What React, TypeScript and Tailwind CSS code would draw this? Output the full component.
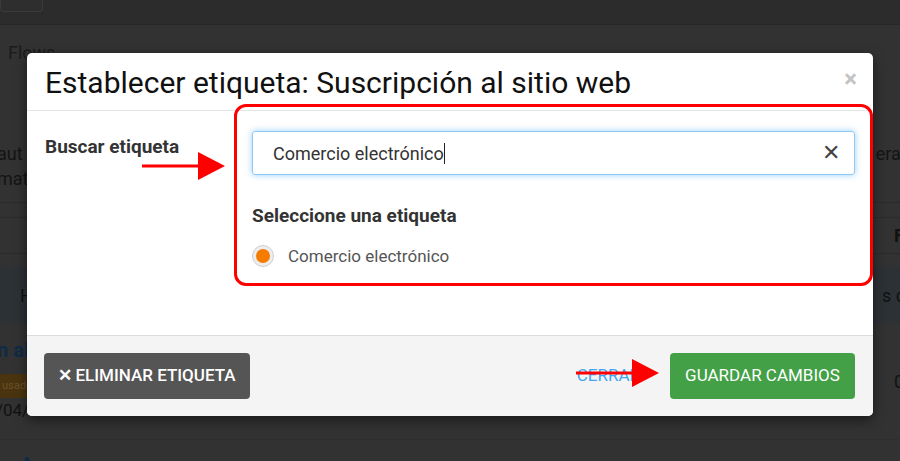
import React from "react";

function Arrow({ className, w }: { className: string; w: number }) {
  return (
    <svg className={className} width={w} height={30} viewBox={`0 0 ${w} 30`}>
      <line x1={0} y1={15} x2={w - 24} y2={15} stroke="#ff0000" strokeWidth={3} />
      <polygon points={`${w - 27},1 ${w},15 ${w - 27},29`} fill="#ff0000" />
    </svg>
  );
}

export default function App() {
  return (
    <div
      className="relative w-[900px] h-[461px] overflow-hidden bg-[#323232] text-[#111]"
      style={{ fontFamily: "Roboto, 'Noto Sans', sans-serif" }}
    >
      {/* background page (dimmed) */}
      <div className="flex flex-col h-full">
        <div className="h-[25px] shrink-0 bg-[#2c2c2c] border-b border-[#272727] relative">
          <div className="w-[43px] h-[12px] border border-[#3a3a3a] border-t-0 rounded-b-[4px] bg-[#2e2e2e]" />
        </div>
        <div className="pl-[8px] pt-[14px] h-[76px] shrink-0 text-[18px] text-[#1b1b1b]">Flows</div>
        <div className="flex justify-between h-[101px] shrink-0 pt-[40px] text-[18px] text-[#141414] leading-[25px]">
          <div className="-ml-[3px]">
            <div>aut</div>
            <div>mat</div>
          </div>
          <div className="mr-[-10px] pl-[2px]">eras</div>
        </div>
        <div className="border-t border-[#2b2b2b] h-[15px] shrink-0" />
        <div className="border-t border-[#2b2b2b] h-[36px] shrink-0 flex justify-end items-center">
          <span className="font-bold text-[18px] text-[#111] mr-[-4px]">F</span>
        </div>
        <div className="border-t border-[#2b2b2b] h-[14px] shrink-0" />
        <div className="h-[56px] shrink-0 bg-[#2c3136] flex justify-between items-center text-[18px] text-[#111]">
          <span className="pl-[20px]">H</span>
          <span className="mr-[-6px]">s q</span>
        </div>
        <div className="h-[116px] shrink-0 relative flex justify-between">
          <div className="pt-[13px]">
            <div className="text-[20px] font-bold text-[#0f2b47] -ml-[3px] leading-[28px]">n al</div>
            <div className="mt-[10px] bg-[#4a3410] text-[#6b5224] text-[11px] px-[2px] w-[27px] h-[24px] leading-[24px] overflow-hidden">usado</div>
            <div className="mt-[0px] text-[17px] text-[#111] -ml-[4px]">/04/2023 10:04:47</div>
          </div>
          <div className="pt-[45px] text-[18px] text-[#111] mr-[-4px]">0</div>
        </div>
        <div className="border-t border-[#2e2e2e] pt-[10px] pl-[20px] text-[20px] font-bold text-[#0f2b47]">Acc</div>
      </div>

      {/* modal */}
      <div className="absolute left-[27px] top-[53px] w-[846px] h-[363px] bg-white rounded-[5px] shadow-[0_4px_12px_rgba(0,0,0,0.5)] flex flex-col overflow-hidden">
        <div className="h-[58px] shrink-0 border-b border-[#e5e5e5] flex items-center justify-between pl-[18px] pr-[18px]">
          <h1 className="text-[30px] text-[#111] leading-none pt-[2px]">
            Establecer etiqueta: Suscripción al sitio web
          </h1>
          <span className="text-[24px] text-[#c4c4c4] font-bold leading-none -mt-[5px] mr-[-2px]">×</span>
        </div>
        <div className="flex-1 flex pl-[18px] pr-[18px] pt-[20px]">
          <div className="w-[207px] shrink-0 pt-[2px] text-[19px] font-bold text-[#333]">Buscar etiqueta</div>
          <div className="flex-1">
            <div className="h-[44px] border border-[#90c8f6] rounded-[3px] shadow-[0_0_6px_rgba(66,165,245,0.55)] flex items-center justify-between pl-[20px] pr-[14px]">
              <span className="text-[18px] text-[#333]">
                Comercio electrónico<span className="inline-block w-[1px] h-[21px] bg-[#222] align-middle -mt-[2px]" />
              </span>
              <span className="text-[22px] text-[#444] leading-none">✕</span>
            </div>
            <div className="mt-[27px] text-[19px] font-bold text-[#333]">Seleccione una etiqueta</div>
            <div className="mt-[13px] flex items-center gap-[14px]">
              <span className="w-[22px] h-[22px] rounded-full border border-[#cfcfcf] bg-[#ededed] flex items-center justify-center">
                <span className="w-[14px] h-[14px] rounded-full bg-[#f57c00]" />
              </span>
              <span className="text-[17px] text-[#555]">Comercio electrónico</span>
            </div>
          </div>
        </div>
        <div className="h-[81px] shrink-0 bg-[#f4f4f4] border-t border-[#dcdcdc] flex items-center justify-between pl-[17px] pr-[18px]">
          <button className="h-[46px] w-[206px] bg-[#555555] rounded-[4px] text-white text-[17px] font-medium flex items-center justify-center gap-[3px]">
            <span className="text-[17px] font-bold">✕</span>ELIMINAR ETIQUETA
          </button>
          <div className="flex items-center gap-[30px]">
            <span className="text-[17px] text-[#42a5f5]">CERRAR</span>
            <button className="h-[46px] w-[185px] bg-[#43a047] rounded-[4px] text-white text-[17px]">
              GUARDAR CAMBIOS
            </button>
          </div>
        </div>
      </div>

      {/* annotations */}
      <div className="absolute left-[234px] top-[104px] w-[639px] h-[182px] border-[3px] border-[#ff0000] rounded-[12px]" />
      <Arrow className="absolute left-[142px] top-[151px]" w={83} />
      <Arrow className="absolute left-[576px] top-[358px]" w={83} />
    </div>
  );
}
